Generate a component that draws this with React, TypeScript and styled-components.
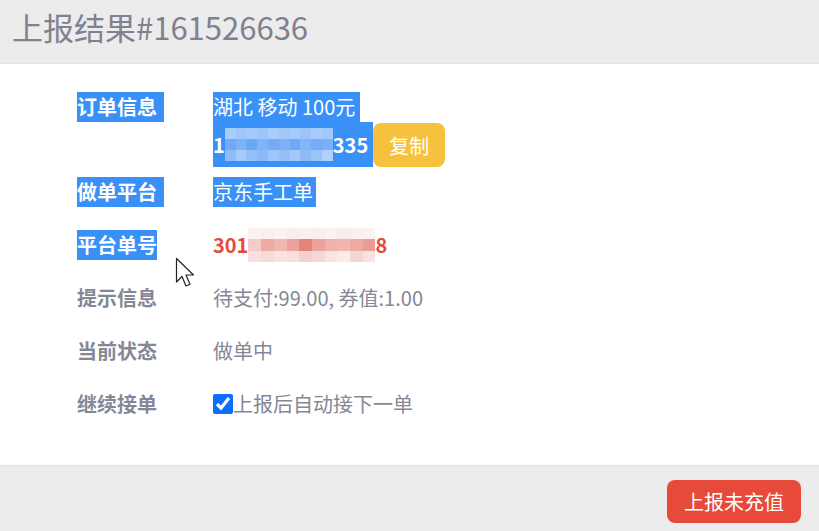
import React, { useState } from "react";
import styled, { createGlobalStyle } from "styled-components";

const Global = createGlobalStyle`
  html, body {
    margin: 0;
    padding: 0;
    background: #fff;
  }
  body {
    font-family: "Noto Sans CJK SC", "Noto Sans", "Liberation Sans", sans-serif;
  }
`;

const Modal = styled.div`
  position: relative;
  width: 819px;
  height: 531px;
  overflow: hidden;
  display: flex;
  flex-direction: column;
  color: #858796;
`;

const Header = styled.div`
  height: 64px;
  box-sizing: border-box;
  padding: 7px 0 0 12px;
  background: #ececec;
  border-bottom: 1px solid #e3e3ea;
  font-size: 31px;
  line-height: 40px;
  color: #7f818e;
`;

const Body = styled.div`
  flex: 1;
  padding: 17px 0 0 77px;
  font-size: 20px;
`;

const Row = styled.div<{ $pt?: number; $pb?: number }>`
  display: flex;
  align-items: flex-start;
  padding: ${(p) => p.$pt ?? 11}px 0 ${(p) => p.$pb ?? 12}px;
  line-height: 30px;
`;

const Label = styled.div`
  width: 136px;
  height: 30px;
  flex-shrink: 0;
  font-weight: bold;
  color: #858796;
`;

const Sel = styled.span<{ $pad?: number }>`
  display: inline-block;
  height: 30px;
  vertical-align: top;
  background: #3990f7;
  color: #fff;
  padding-right: ${(p) => p.$pad ?? 0}px;
`;

const Value = styled.div`
  display: flex;
  flex-direction: column;
  align-items: flex-start;
`;

const PhoneLine = styled.div`
  display: flex;
  align-items: stretch;
`;

const PhoneSel = styled.div`
  display: flex;
  align-items: center;
  height: 45px;
  padding-right: 5px;
  background: #3990f7;
  color: #fff;
  font-weight: bold;
`;

const CopyBtn = styled.button`
  margin-top: 1px;
  height: 44px;
  padding: 0 16px;
  border: none;
  border-radius: 8px;
  background: #f6c23e;
  color: #fff;
  font-family: inherit;
  font-size: 20px;
`;

const OrderNo = styled.div`
  display: flex;
  align-items: center;
  height: 30px;
  color: #e74a3b;
  font-weight: bold;
`;

const Mosaic = styled.span<{ $w: number; $cols: number }>`
  display: inline-grid;
  width: ${(p) => p.$w}px;
  height: 34px;
  margin: -2px 0;
  grid-template-columns: repeat(${(p) => p.$cols}, 1fr);
  grid-template-rows: repeat(3, 1fr);
`;

const Check = styled.label`
  display: flex;
  align-items: center;
  input {
    width: 20px;
    height: 20px;
    margin: 0;
    accent-color: #0d6efd;
  }
`;

const Footer = styled.div`
  height: 66px;
  box-sizing: border-box;
  background: #ececec;
  border-top: 1px solid #e3e3ee;
  display: flex;
  justify-content: flex-end;
  align-items: flex-start;
  padding: 14px 18px 0 0;
`;

const DangerBtn = styled.button`
  height: 43px;
  padding: 0 17px;
  border: none;
  border-radius: 8px;
  background: #e74a3b;
  color: #fff;
  font-family: inherit;
  font-size: 20px;
`;

const Cursor = styled.svg`
  position: absolute;
  left: 175px;
  top: 257px;
`;

const phoneBlocks = [
  "#a9cdfb", "#9fc6fa", "#a5cafa", "#9cc5fa", "#a8ccfb", "#9fc7fa", "#a4cafb", "#9ac4fa", "#a7cbfb", "#a2c8fa",
  "#6fa9f7", "#7db2f8", "#6ba7f7", "#80b4f8", "#73abf7", "#7cb1f8", "#6ea8f7", "#83b5f8", "#74acf7", "#7ab0f8",
  "#8fbcf9", "#a6cbfb", "#96c0f9", "#8cbaf9", "#9fc6fa", "#94bff9", "#a3c9fa", "#8fbcf9", "#9ac3fa", "#b0d1fb",
];

const orderBlocks = [
  "#fbf2f1", "#f9efee", "#faf1f0", "#f9eeed", "#faf0ef", "#f9eeed", "#faf1f0", "#f8edec", "#f9efee", "#faf1f0",
  "#f4cbc7", "#eeaaa4", "#f0b6b1", "#eba39d", "#e4857c", "#eba39c", "#efb3ad", "#f0b7b2", "#ecaaa3", "#e99d96",
  "#f7e0de", "#f6dad7", "#f8e3e1", "#f7dfdc", "#f3d1cd", "#f5d8d5", "#f8e5e3", "#f9ebea", "#f5d6d3", "#f7e2e0",
];

const MosaicBlock = ({ w, colors }: { w: number; colors: string[] }) => (
  <Mosaic $w={w} $cols={10}>
    {colors.map((c, i) => (
      <span key={i} style={{ background: c }} />
    ))}
  </Mosaic>
);

const App = () => {
  const [autoNext, setAutoNext] = useState(true);

  return (
    <Modal>
      <Global />
      <Header>上报结果#161526636</Header>
      <Body>
        <Row $pb={0}>
          <Label>
            <Sel $pad={7}>订单信息</Sel>
          </Label>
          <Value>
            <Sel $pad={5}>湖北 移动 100元</Sel>
            <PhoneLine>
              <PhoneSel>
                1
                <MosaicBlock w={108} colors={phoneBlocks} />
                335
              </PhoneSel>
              <CopyBtn>复制</CopyBtn>
            </PhoneLine>
          </Value>
        </Row>
        <Row $pt={10}>
          <Label>
            <Sel $pad={7}>做单平台</Sel>
          </Label>
          <Value>
            <Sel $pad={3}>京东手工单</Sel>
          </Value>
        </Row>
        <Row>
          <Label>
            <Sel $pad={0}>平台单号</Sel>
          </Label>
          <OrderNo>
            301
            <MosaicBlock w={127} colors={orderBlocks} />8
          </OrderNo>
        </Row>
        <Row>
          <Label>提示信息</Label>
          <Value>待支付:99.00, 券值:1.00</Value>
        </Row>
        <Row>
          <Label>当前状态</Label>
          <Value>做单中</Value>
        </Row>
        <Row>
          <Label>继续接单</Label>
          <Check>
            <input
              type="checkbox"
              checked={autoNext}
              onChange={() => setAutoNext(!autoNext)}
            />
            上报后自动接下一单
          </Check>
        </Row>
      </Body>
      <Footer>
        <DangerBtn>上报未充值</DangerBtn>
      </Footer>
      <Cursor width="24" height="34" viewBox="0 0 24 34">
        <path
          d="M1.5 1.5 L1.5 25 L7 19.5 L11 29 L15 27.2 L11 18 L18.5 18 Z"
          fill="#fff"
          stroke="#222"
          strokeWidth="1.2"
          strokeLinejoin="round"
        />
      </Cursor>
    </Modal>
  );
};

export default App;
